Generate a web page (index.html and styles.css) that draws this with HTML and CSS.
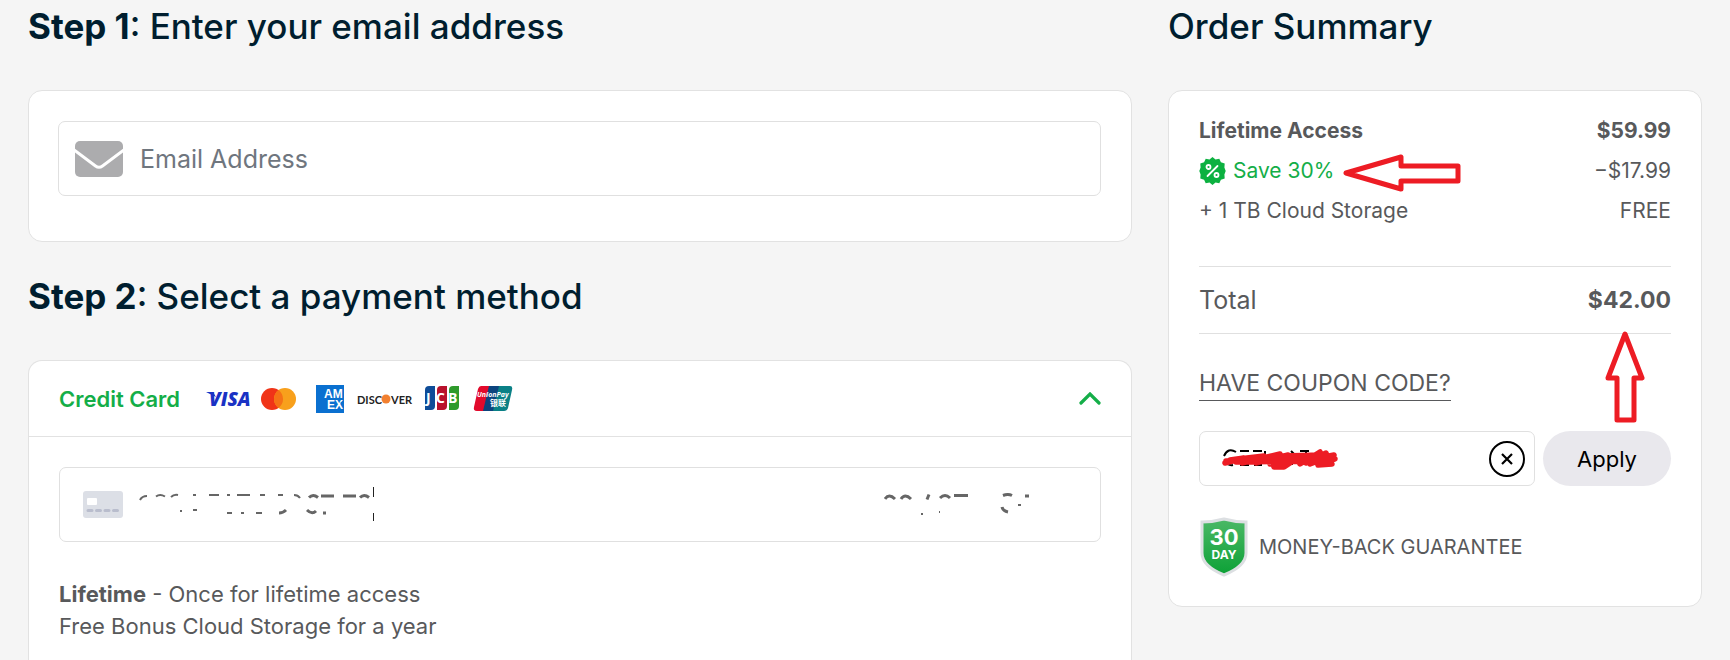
FILE: index.html
```html
<!DOCTYPE html>
<html lang="en">
<head>
<meta charset="utf-8">
<meta name="viewport" content="width=device-width, initial-scale=1">
<title>Checkout</title>
<link rel="stylesheet" href="styles.css">
</head>
<body>
<div class="checkout">
  <main class="steps">
    <h2 class="heading"><strong>Step 1</strong>: Enter your email address</h2>
    <section class="card email-card">
      <label class="field email-field">
        <svg class="mail-icon" viewBox="0 0 48 36" aria-hidden="true"><rect width="48" height="36" rx="5" fill="#acacae"/><path d="M-1 9L20.500 25Q24 27.500 27.500 25L49 9" fill="none" stroke="#fff" stroke-width="3"/></svg>
        <input class="email-input" type="email" placeholder="Email Address" aria-label="Email Address">
      </label>
    </section>
    <h2 class="heading"><strong>Step 2</strong>: Select a payment method</h2>
    <section class="card pay-card">
      <button class="method" type="button" aria-expanded="true">
        <span class="method-name">Credit Card</span>
        <svg class="brands" viewBox="0 0 308 30" role="img" aria-label="Accepted cards">
          <text class="visa" x="3" y="22">VISA</text>
          <path d="M0 8h7l3 5z" fill="#1a32c4"/>
          <circle cx="66" cy="15" r="11" fill="#f03418"/><circle cx="79" cy="15" r="11" fill="#f8a01c"/><path d="M72.500 6.100a11 11 0 0 1 0 17.800a11 11 0 0 1 0-17.800z" fill="#f57216"/>
          <rect x="110" y="1" width="28" height="28" fill="#0a70d0"/>
          <text class="amex"><tspan x="118" y="14">AM</tspan><tspan x="121" y="25">EX</tspan></text>
          <path d="M134 19l4-3v7z" fill="#0a70d0"/>
          <text class="discover" x="151" y="20">DISC</text><circle cx="180" cy="15" r="4.500" fill="#f28030"/><text class="discover" x="185" y="20">VER</text>
          <path d="M223 2h6v20q0 4-4 4h-6V6q0-4 4-4z" fill="#0e4c98"/><path d="M235 2h6v20q0 4-4 4h-6V6q0-4 4-4z" fill="#b8122c"/><path d="M247 2h6v20q0 4-4 4h-6V6q0-4 4-4z" fill="#2f9a2c"/>
          <text class="jcb"><tspan x="220" y="19">J</tspan><tspan x="230" y="19">C</tspan><tspan x="242" y="19">B</tspan></text>
          <path d="M273 2h12l-5 25h-9q-4 0-3-4l4-18q1-3 3-3z" fill="#e20a2c"/><path d="M283 2h13l-6 25h-13z" fill="#0c447e"/><path d="M293 2h11q3 0 2 4l-4 18q-1 3-4 3h-11z" fill="#0a8086"/>
          <text class="union" x="271" y="13">UnionPay</text><text class="union-cjk" x="284" y="22">银联</text>
        </svg>
        <svg class="chevron" viewBox="0 0 22 13" aria-hidden="true"><path d="M2 11L11 2L20 11" fill="none" stroke="#14ae48" stroke-width="3.200" stroke-linecap="round"/></svg>
      </button>
      <div class="pay-body">
        <div class="field number-field">
          <svg class="card-icon" viewBox="0 0 40 27" aria-hidden="true"><rect width="40" height="27" rx="3" fill="#dcdfe6"/><rect x="4" y="7" width="10" height="7" rx="1" fill="#fff"/><path d="M5 19.500h4M13.500 19.500h4M22 19.500h4M30.500 19.500h4" stroke="#b9bdcd" stroke-width="3" stroke-linecap="round"/></svg>
          <svg class="marks" viewBox="0 0 236 36" aria-hidden="true"><g fill="none" stroke="#666" stroke-width="2"><path d="M1 13q2-4 7-4M17 9.500q4-3 9 0M32 10q3-3 7-2M54 8h3M70 8h10M88 8h3M98 8h13M121 8h5M139 8h5M155 8q4 0 6 3M41 24h2M54 23h4M88 26h5M102 26h3M117 26h6"/><path stroke-width="3" d="M170 10.500q4-4 9 0M182 9h13M204 9h13M221 10.500q4-4 9 0M140 26q4 0 7-3M168 23q5 5 9 1M184 26h3"/></g><path d="M234.500 0v10M234.500 26v8" stroke="#222"/></svg>
          <svg class="marks marks-end" viewBox="0 0 148 24" aria-hidden="true"><g fill="none" stroke="#666" stroke-width="3"><path d="M1 6q4-6 10 0M17 6q4-6 10 0M45 1.500l-2 5M56 5q5-5 10 0M70 2.500h14M119 2.500q5-2 9 0M141 3h4M118 14q1 4 6 5"/><path stroke-width="2" d="M134 12h3M37 21h2M55 19h1"/></g></svg>
        </div>
        <p class="terms"><strong>Lifetime</strong> - Once for lifetime access<br>Free Bonus Cloud Storage for a year</p>
      </div>
    </section>
  </main>
  <aside class="summary">
    <h2 class="heading">Order Summary</h2>
    <section class="card summary-card">
      <dl class="lines">
        <div class="line strong"><dt>Lifetime Access</dt><dd>$59.99</dd></div>
        <div class="line"><dt class="save"><svg class="badge" viewBox="0 0 27 30" aria-hidden="true"><path d="M13.500 1l3 2.500 3.800-.8 1.600 3.600 3.800 1.200-.3 4 1.300 3.500-1.300 3.500.3 4-3.800 1.200-1.600 3.600-3.800-.8-3 2.500-3-2.500-3.800.8-1.600-3.600-3.800-1.200.3-4L.3 15l1.300-3.500-.3-4 3.800-1.200 1.600-3.600 3.800.8z" fill="#0cb140"/><path d="M18.500 10l-10 10" stroke="#fff" stroke-width="1.800" stroke-linecap="round"/><g fill="none" stroke="#fff" stroke-width="1.800"><circle cx="9.500" cy="11" r="2"/><circle cx="17.500" cy="19" r="2"/></g></svg>Save 30%<svg class="arrow-left" viewBox="0 0 118 38" aria-hidden="true"><path d="M3 19L58 3v9h57v15H58v8z" fill="#fff" stroke="#ed1c24" stroke-width="5" stroke-linejoin="round"/></svg></dt><dd>−$17.99</dd></div>
        <div class="line"><dt>+ 1 TB Cloud Storage</dt><dd>FREE</dd></div>
      </dl>
      <div class="total"><span>Total</span><strong>$42.00</strong>
        <svg class="arrow-up" viewBox="0 0 40 92" aria-hidden="true"><path d="M20 3L37 47h-8v42H12V47H3z" fill="#fff" stroke="#ed1c24" stroke-width="5" stroke-linejoin="round"/></svg>
      </div>
      <a class="coupon-link" href="#coupon">HAVE COUPON CODE?</a>
      <form class="coupon">
        <div class="coupon-box">
          <input class="coupon-input" id="coupon" type="text" aria-label="Coupon code">
          <svg class="scribble" viewBox="0 0 116 24" aria-hidden="true"><path d="M2 9q4-9 12-4M18 4h9M31 4h9M43 4v5M69 4l4 4M78 4h9M84 4v6M3 14q3 5 8 4M18 18h9M32 18h8M70 14v4" fill="none" stroke="#000" stroke-width="2"/><path d="M3 16L22 11L8 13L42 9L20 16L58 7L34 16L66 8L48 17L78 10L52 20L62 20L74 12L84 10L78 17L98 5L84 16L104 6L88 17L112 8L92 12L113 12L96 18L110 17M4 14L112 11M14 15L106 14M60 9L100 8" fill="none" stroke="#ed1c24" stroke-width="5.500" stroke-linecap="round" stroke-linejoin="round"/></svg>
          <button class="clear" type="button" aria-label="Clear coupon"><svg viewBox="0 0 36 36" aria-hidden="true"><circle cx="18" cy="18" r="17" fill="none" stroke="#000" stroke-width="2"/><path d="M13 13l10 10M23 13L13 23" stroke="#000" stroke-width="2.200"/></svg></button>
        </div>
        <button class="apply" type="button">Apply</button>
      </form>
      <div class="guarantee">
        <svg class="shield" viewBox="0 0 50 60" role="img" aria-label="30 day"><defs><linearGradient id="shield-fill" x2="0" y2="1"><stop offset="0" stop-color="#4bb866"/><stop offset="1" stop-color="#0ca136"/></linearGradient></defs><path d="M25 2Q36 5 47 5V36Q47 49 25 58Q3 49 3 36V5Q14 5 25 2z" fill="url(#shield-fill)" stroke="#dcdfe2" stroke-width="3"/><text><tspan class="shield-num" x="25" y="28">30</tspan><tspan class="shield-day" x="25" y="42">DAY</tspan></text></svg>
        <span>MONEY-BACK GUARANTEE</span>
      </div>
    </section>
  </aside>
</div>
</body>
</html>
```
FILE: styles.css
```css
* { box-sizing: border-box; }
body { margin: 0; background: #f5f5f5; color: #58595b; font: 20px/32px Inter, "Open Sans", sans-serif; overflow: hidden; }
svg { display: block; flex: none; }
input, button { font: inherit; color: inherit; }
.checkout { display: grid; grid-template-columns: minmax(0, 1104fr) minmax(0, 534fr); gap: 36px; padding: 0 28px; }
.heading { margin: 0; padding: 6px 0 44px; font-size: 35px; line-height: 40px; font-weight: 500; color: #001e2f; }
.heading strong { font-weight: 700; }
.card { background: #fff; border: 1px solid #e2e2e2; border-radius: 14px; }
.field { display: flex; align-items: center; height: 75px; border: 1px solid #e0e0e0; border-radius: 7px; }
.email-card { padding: 30px 30px 45px 29px; margin-bottom: 28px; }
.email-field { padding: 0 16px; gap: 17px; }
.mail-icon { width: 48px; height: 36px; }
.email-input { flex: 1; border: 0; outline: 0; background: none; padding: 0; font-size: 25px; }
.email-input::placeholder { color: #6f767e; opacity: 1; }
.pay-card { border-bottom: 0; border-radius: 14px 14px 0 0; }
.method { display: flex; align-items: center; width: 100%; height: 76px; padding: 0 30px; border: 0; border-bottom: 1px solid #e2e2e2; background: none; text-align: left; }
.method-name { color: #14ae48; font-size: 22px; font-weight: 600; }
.brands { width: 308px; height: 30px; margin-left: 26px; }
.brands text { font-family: "Open Sans", sans-serif; font-weight: 700; }
.brands .visa { font-size: 19px; font-weight: 800; font-style: italic; fill: #1a32c4; }
.brands .amex { font-family: "Liberation Sans", sans-serif; font-size: 12px; fill: #fff; }
.brands .discover { font-family: Lato, sans-serif; font-size: 11px; fill: #222; }
.brands .jcb { font-size: 14px; fill: #fff; }
.brands .union { font-size: 7px; font-style: italic; fill: #fff; }
.brands .union-cjk { font-family: "Noto Sans CJK SC", sans-serif; font-size: 8px; fill: #fff; }
.chevron { width: 22px; height: 13px; margin-left: auto; }
.pay-body { padding: 30px; }
.number-field { padding: 0 68px 0 23px; gap: 16px; }
.card-icon { width: 40px; height: 27px; }
.marks { width: 236px; height: 36px; }
.marks-end { width: 148px; height: 24px; margin-left: auto; }
.terms { margin: 36px 0 0; font-size: 22px; }
.summary-card { padding: 20px 30px 29px; }
.lines { margin: 0; font-size: 21px; }
.line { display: flex; justify-content: space-between; align-items: center; height: 40px; }
.line dt, .line dd { margin: 0; }
.strong { font-weight: 700; }
.save { display: flex; align-items: center; gap: 7px; color: #14ae48; position: relative; }
.badge { width: 27px; height: 30px; }
.arrow-left { position: absolute; left: 144px; top: -1px; width: 118px; height: 38px; }
.total { position: relative; display: flex; justify-content: space-between; align-items: center; height: 68px; margin-top: 35px; border: 1px solid #e0e0e0; border-width: 1px 0; font-size: 23px; }
.total span { font-size: 25px; }
.arrow-up { position: absolute; right: 26px; top: 64px; width: 40px; height: 92px; }
.coupon-link { display: inline-block; margin-top: 32px; border-bottom: 1px solid #58595b; color: inherit; font-size: 23px; line-height: 34px; text-decoration: none; }
.coupon { display: flex; gap: 8px; margin-top: 30px; }
.coupon-box { position: relative; flex: 1; min-width: 0; display: flex; align-items: center; height: 55px; padding: 0 9px 0 23px; border: 1px solid #e0e0e0; border-radius: 7px; }
.coupon-input { flex: 1; min-width: 0; border: 0; outline: 0; background: none; }
.scribble { position: absolute; left: 22px; top: 15px; width: 116px; height: 24px; }
.clear { flex: none; width: 36px; height: 36px; padding: 0; border: 0; background: none; }
.apply { flex: none; width: 128px; height: 55px; padding: 0; border: 0; border-radius: 28px; background: #e9e8ed; color: #000; font-size: 22px; }
.guarantee { display: flex; align-items: center; gap: 10px; margin-top: 31px; }
.shield { width: 50px; height: 60px; }
.shield text { fill: #fff; font-weight: 700; text-anchor: middle; }
.shield-num { font-size: 22px; }
.shield-day { font-size: 12px; }
```
